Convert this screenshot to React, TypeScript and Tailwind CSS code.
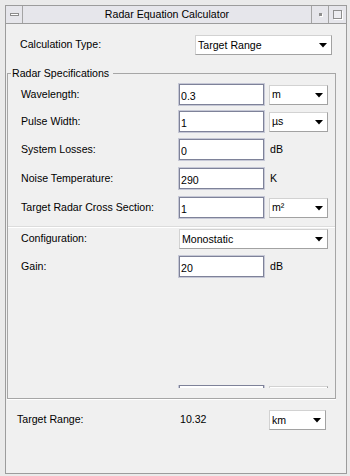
import React from 'react';

function Drop({ text, w }: { text: string; w: string }) {
  return (
    <div
      className={`h-[20px] ${w} bg-white border border-[#a2a2a2] border-t-[#d2d2d2] border-l-[#d2d2d2] flex items-center pl-[2px] pr-[4px]`}
    >
      <span className="flex-1 leading-none">{text}</span>
      <svg width="8" height="5" viewBox="0 0 8 5" className="mt-[1px]">
        <polygon points="0,0 8,0 4,4.5" fill="#000" />
      </svg>
    </div>
  );
}

function Field({ value }: { value: string }) {
  return (
    <input
      readOnly
      value={value}
      className="h-[21px] w-[85px] bg-white border border-[#7e8299] shadow-[0_0_0_1px_#c6c8d6] pl-[1px] pt-[2px] outline-none"
    />
  );
}

function Row({
  label,
  value,
  unit,
  drop,
  className = '',
}: {
  label: string;
  value: string;
  unit?: string;
  drop?: string;
  className?: string;
}) {
  return (
    <div className={`flex items-center pl-[13px] ${className}`}>
      <span className="w-[158px] shrink-0">{label}</span>
      <Field value={value} />
      <div className="ml-[5px]">
        {drop ? <Drop text={drop} w="w-[59px]" /> : <span className="pl-[1px]">{unit}</span>}
      </div>
    </div>
  );
}

export default function App() {
  return (
    <div className="w-[350px] h-[476px] bg-[#eaeaea] overflow-hidden font-['Liberation_Sans',Arial,sans-serif] text-[10.6px] text-black">
      <div className="ml-[5px] mt-[5px] w-[342px] h-[469px] border border-[#9c9c9c] bg-[#f0f0f0] flex flex-col">
        {/* title bar */}
        <div className="h-[18px] bg-[#e6e6eb] border-b border-[#9c9c9c] flex">
          <div className="w-[17px] border-r border-[#a4a4a4] flex items-center justify-center">
            <div className="w-[9px] h-[3px] border border-[#8c8c8c] bg-white" />
          </div>
          <div className="w-[288px] flex items-center justify-center">Radar Equation Calculator</div>
          <div className="w-[17px] border-l border-[#a4a4a4] flex items-center justify-center">
            <div className="w-[3px] h-[3px] bg-[#8e8e8e] shadow-[1px_1px_0_#fff]" />
          </div>
          <div className="w-[18px] border-l border-[#a4a4a4] flex items-center justify-center">
            <div className="w-[9px] h-[9px] border border-[#8e8e8e] bg-[#ececf0] shadow-[1px_1px_0_#fff]" />
          </div>
        </div>

        {/* body */}
        <div className="flex-1 flex flex-col">
          <div className="mt-[11px] flex items-center pl-[14px]">
            <span className="w-[175px] shrink-0">Calculation Type:</span>
            <Drop text="Target Range" w="w-[137px]" />
          </div>

          <fieldset className="ml-[1px] mt-[12px] w-[329px] border border-[#a6a6a6] shadow-[0_1px_0_#fff]">
            <legend className="ml-[3px] pl-[1px] pr-[4px] leading-[12px]">Radar Specifications</legend>
            <div className="h-[319px] flex flex-col pt-[5px] pb-[10px]">
              <Row label="Wavelength:" value="0.3" drop="m" />
              <Row label="Pulse Width:" value="1" drop="µs" className="mt-[6px]" />
              <Row label="System Losses:" value="0" unit="dB" className="mt-[7px]" />
              <Row label="Noise Temperature:" value="290" unit="K" className="mt-[8px]" />
              <Row label="Target Radar Cross Section:" value="1" drop="m²" className="mt-[8px]" />
              <div className="mt-[8px] h-[2px] border-t border-[#dcdcdc] border-b border-b-white" />
              <div className="mt-[1px] flex items-center pl-[13px]">
                <span className="w-[158px] shrink-0">Configuration:</span>
                <Drop text="Monostatic" w="w-[149px]" />
              </div>
              <Row label="Gain:" value="20" unit="dB" className="mt-[7px]" />
              {/* row scrolled out of view, only its top edge shows */}
              <div className="mt-auto h-[3px] overflow-hidden">
                <Row label="" value="" drop=" " />
              </div>
            </div>
          </fieldset>

          <div className="mt-[11px] flex items-center pl-[11px]">
            <span className="w-[163px] shrink-0">Target Range:</span>
            <span className="w-[89px] shrink-0">10.32</span>
            <Drop text="km" w="w-[57px]" />
          </div>
        </div>
      </div>
    </div>
  );
}
